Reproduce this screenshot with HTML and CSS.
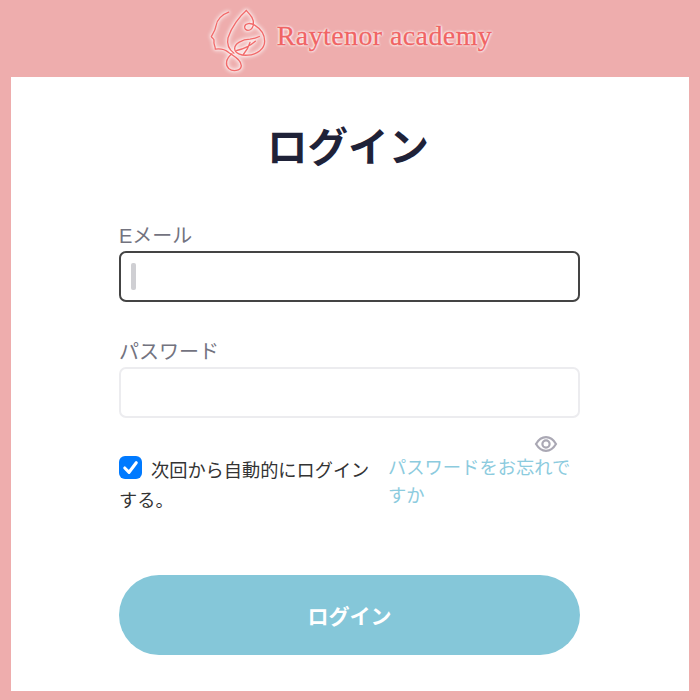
FILE: index.html
```html
<!DOCTYPE html>
<html lang="ja">
  <head>
    <meta charset="UTF-8" />
    <meta name="viewport" content="width=device-width, initial-scale=1.0" />
    <title>ログイン</title>
    <link rel="stylesheet" href="styles.css">
  </head>
  <body>
    <header class="site-header">
      <svg class="logo-mark" viewBox="50 20 180 200" fill="none" stroke="#f26a6a" stroke-width="4" stroke-linecap="round" stroke-linejoin="round">
        <path d="M112 35C92 42 76 58 74 76C72 90 66 98 60 108C62 114 70 114 68 122C66 132 72 136 72 146C86 144 100 146 112 156C126 166 150 178 150 196C148 212 124 214 112 204C102 194 102 176 122 160" />
        <path d="M165 30C146 46 120 80 110 112C106 130 112 146 128 158" />
        <path d="M165 30C176 42 190 56 186 74C180 96 158 92 160 78C162 68 178 66 190 74C206 84 220 100 220 122C220 146 196 162 170 164C150 166 130 158 130 144C130 130 152 116 176 116C190 114 196 112 204 108" />
        <path d="M136 150C154 146 176 136 192 122M156 162C166 150 172 140 176 126" />
      </svg>
      <span class="logo-text">Raytenor academy</span>
    </header>

    <main class="login-card">
      <h1>ログイン</h1>
      <form class="login-form">
        <div class="form-group">
          <label for="email">Eメール</label>
          <div class="input-wrap">
            <input class="is-focused" type="text" id="email" name="email" />
            <span class="caret"></span>
          </div>
        </div>
        <div class="form-group">
          <label for="password">パスワード</label>
          <div class="input-wrap">
            <input type="password" id="password" name="password" />
            <svg class="eye-icon" viewBox="0 0 24 24" fill="none" stroke="#aaa8b4" stroke-width="2.2">
              <path d="M2 12C5 7 8.500 5.200 12 5.200C15.500 5.200 19 7 22 12C19 17 15.500 18.800 12 18.800C8.500 18.800 5 17 2 12Z" />
              <circle cx="12" cy="12" r="3.600" />
            </svg>
          </div>
        </div>
        <div class="form-options">
          <label class="remember">
            <span class="check-box">
              <svg viewBox="0 0 24 24" fill="none" stroke="#fff" stroke-width="3.200" stroke-linecap="round" stroke-linejoin="round">
                <path d="M6 12.500L10.500 17L18 7" />
              </svg>
            </span>
            次回から自動的にログインする。
          </label>
          <a class="forgot-link" href="#">パスワードをお忘れですか</a>
        </div>
        <button type="submit">ログイン</button>
      </form>
    </main>
  </body>
</html>
```

FILE: styles.css
```css
* {
  margin: 0;
  padding: 0;
  box-sizing: border-box;
}

body {
  font-family: "Liberation Sans", "Noto Sans CJK JP", sans-serif;
  background-color: #eeadad;
  height: 700px;
  padding: 0 11px 9px;
  display: flex;
  flex-direction: column;
  overflow: hidden;
}

.site-header {
  height: 77px;
  display: flex;
  justify-content: center;
  align-items: center;
  gap: 9px;
}

.logo-mark {
  width: 60px;
  height: 67px;
  margin-top: 3px;
  filter: drop-shadow(0 0 2px #fff) drop-shadow(0 0 1px #fff);
}

.logo-text {
  font-family: "Liberation Serif", serif;
  font-size: 28px;
  letter-spacing: 0.4px;
  color: #f06464;
  -webkit-text-stroke: 0.3px #f06464;
  text-shadow: 0 0 3px #fff, 0 0 3px #fff, 0 0 2px #fff;
  margin-bottom: 5px;
}

.login-card {
  flex: 1;
  background: #fff;
  padding: 43px 109px 0 108px;
}

.login-card h1 {
  text-align: center;
  font-size: 40.500px;
  font-weight: bold;
  line-height: 56px;
  color: #1f2238;
  padding-right: 3px;
  margin-bottom: 45px;
}

.form-group {
  margin-bottom: 35px;
}

.form-group label {
  display: block;
  font-size: 20px;
  line-height: 30px;
  color: #73737f;
}

.input-wrap {
  position: relative;
}

.input-wrap input {
  display: block;
  width: 100%;
  height: 51px;
  border: 2px solid #ececef;
  border-radius: 7px;
  outline: none;
}

.input-wrap input.is-focused {
  border-color: #444;
}

.caret {
  position: absolute;
  left: 12px;
  top: 12px;
  width: 5px;
  height: 27px;
  border-radius: 2px;
  background-color: #cfcfd3;
}

.eye-icon {
  position: absolute;
  right: 22px;
  bottom: -38px;
  width: 24px;
  height: 24px;
}

.form-options {
  display: flex;
  gap: 10px;
  margin-top: -3px;
}

.remember {
  width: 259px;
  font-size: 18.200px;
  line-height: 30px;
  color: #333;
  padding-top: 6px;
}

.check-box {
  display: inline-block;
  width: 23px;
  height: 23px;
  margin-right: 4px;
  vertical-align: -2px;
  border-radius: 6px;
  background-color: #007aff;
}

.check-box svg {
  display: block;
  width: 23px;
  height: 23px;
}

.forgot-link {
  flex: 1;
  font-size: 18.300px;
  line-height: 28px;
  color: #8ccbde;
  text-decoration: none;
  padding-top: 4px;
}

.login-form button {
  display: block;
  width: 100%;
  height: 80px;
  margin-top: 59px;
  border: none;
  border-radius: 40px;
  background-color: #85c7d9;
  color: #fff;
  font-family: inherit;
  font-size: 21px;
  font-weight: bold;
  cursor: pointer;
}
```
